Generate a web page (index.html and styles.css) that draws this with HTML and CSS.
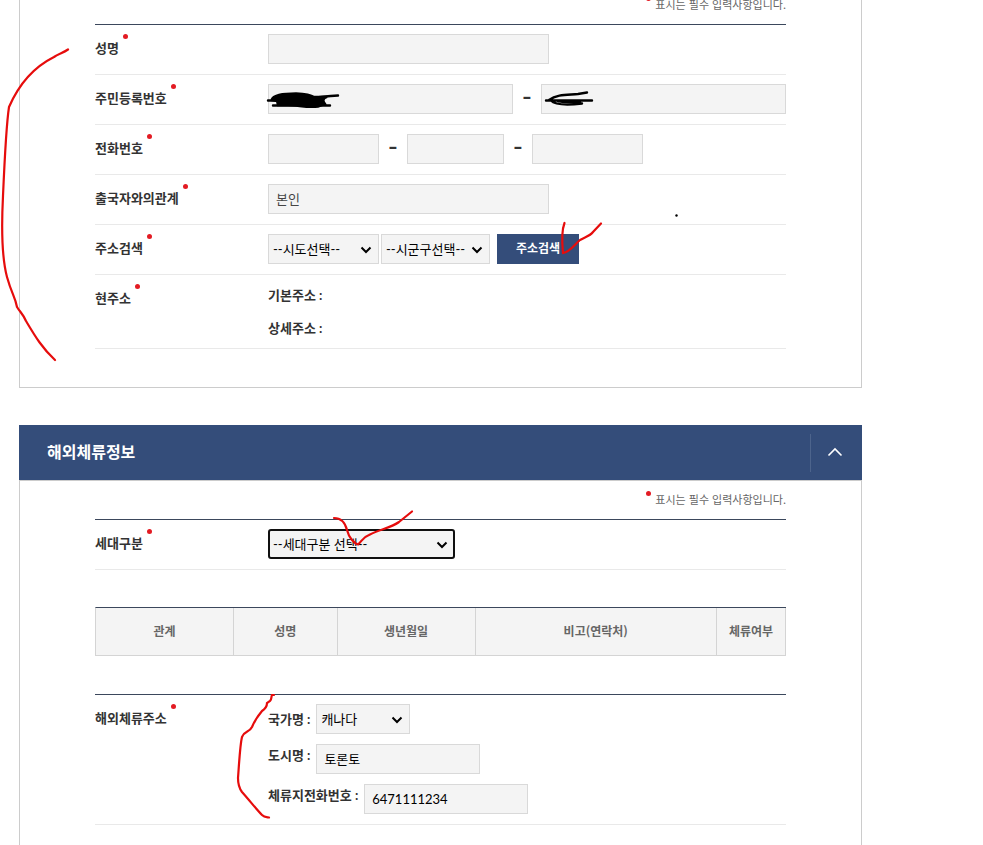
FILE: index.html
```html
<!DOCTYPE html>
<html lang="ko">
<head>
<meta charset="utf-8">
<meta name="viewport" content="width=device-width, initial-scale=1">
<title>해외체류정보</title>
<link rel="stylesheet" href="styles.css">
</head>
<body>
<main class="page">
  <section class="panel panel-first">
    <div class="panel-body">
      <p class="note"><i class="dot"></i><span>표시는 필수 입력사항입니다.</span></p>
      <div class="form">
        <div class="row">
          <label class="name" for="name">성명<i class="dot"></i></label>
          <div class="value"><input class="field w-long" id="name" type="text"></div>
        </div>
        <div class="row">
          <label class="name" for="ssn1">주민등록번호<i class="dot"></i></label>
          <div class="value">
            <input class="field grow" id="ssn1" type="text">
            <span class="dash">-</span>
            <input class="field grow" type="text" aria-labelledby="ssn1">
          </div>
        </div>
        <div class="row">
          <label class="name" for="tel1">전화번호<i class="dot"></i></label>
          <div class="value">
            <input class="field w-tel" id="tel1" type="text">
            <span class="dash">-</span>
            <input class="field w-mid" type="text" aria-labelledby="tel1">
            <span class="dash">-</span>
            <input class="field w-tel" type="text" aria-labelledby="tel1">
          </div>
        </div>
        <div class="row">
          <label class="name" for="relation">출국자와의관계<i class="dot"></i></label>
          <div class="value"><input class="field w-long muted" id="relation" type="text" value="본인"></div>
        </div>
        <div class="row">
          <label class="name" for="sido">주소검색<i class="dot"></i></label>
          <div class="value tight">
            <span class="picker w-tel"><select class="field select" id="sido"><option>--시도선택--</option></select><svg class="arrow" viewBox="0 0 12 8"><path d="M1.500 1.500 6 6l4.500-4.500"/></svg></span>
            <span class="picker w-gu"><select class="field select" aria-labelledby="sido"><option>--시군구선택--</option></select><svg class="arrow" viewBox="0 0 12 8"><path d="M1.500 1.500 6 6l4.500-4.500"/></svg></span>
            <button class="search" type="button">주소검색</button>
          </div>
        </div>
        <div class="row">
          <span class="name">현주소<i class="dot"></i></span>
          <div class="address">
            <div>기본주소 :</div>
            <div>상세주소 :</div>
          </div>
        </div>
      </div>
    </div>
  </section>

  <section class="panel">
    <header class="panel-head">
      <h2>해외체류정보</h2>
      <button class="toggle" type="button" aria-label="접기">
        <svg width="16" height="10" viewBox="0 0 16 10" fill="none" stroke="#fff" stroke-width="1.600"><path d="M1.500 8.500 8 2l6.500 6.500"/></svg>
      </button>
    </header>
    <div class="panel-body">
      <p class="note"><i class="dot"></i><span>표시는 필수 입력사항입니다.</span></p>
      <div class="form">
        <div class="row">
          <label class="name" for="household">세대구분<i class="dot"></i></label>
          <div class="value"><span class="picker w-house"><select class="field select focused" id="household"><option>--세대구분 선택--</option></select><svg class="arrow" viewBox="0 0 12 8"><path d="M1.500 1.500 6 6l4.500-4.500"/></svg></span></div>
        </div>
      </div>

      <table class="members">
        <colgroup><col class="c-rel"><col class="c-name"><col class="c-birth"><col class="c-memo"><col class="c-stay"></colgroup>
        <thead>
          <tr><th>관계</th><th>성명</th><th>생년월일</th><th>비고(연락처)</th><th>체류여부</th></tr>
        </thead>
      </table>

      <div class="form">
        <div class="row">
          <span class="name">해외체류주소<i class="dot"></i></span>
          <div class="stack">
            <div class="line"><label class="center" for="country">국가명 :</label><span class="picker w-country"><select class="field select" id="country"><option>캐나다</option></select><svg class="arrow" viewBox="0 0 12 8"><path d="M1.500 1.500 6 6l4.500-4.500"/></svg></span></div>
            <div class="line"><label for="city">도시명 :</label><input class="field w-short" id="city" type="text" value="토론토"></div>
            <div class="line"><label for="stay-tel">체류지전화번호 :</label><input class="field w-short" id="stay-tel" type="text" value="6471111234"></div>
          </div>
        </div>
      </div>
    </div>
  </section>
</main>

<svg class="ink" width="720" height="845" viewBox="0 0 720 845" aria-hidden="true">
  <g class="red">
    <path d="M68 49.500C63 53 58 54 54 57C34 67 19 84 9 107C7 120 5 150 3 196C1 235 3 262 7 277C12 295 15 296 17 307C20 312 23 314 26 321C35 336 42 348 55 360"/>
    <path d="M564.500 223C561 232 562 243 563 253C570 252 575 244 580 240C585 237 590 236 593 232L601 223.500"/>
    <path d="M334 518C341 518 345 522 347 530C349 538 354 543 358 544.500C362 541 363 537 369 535C380 529 391 528 399 522L412 511.500"/>
    <path d="M274 695H272C271 697 272 699 270 701L267 703C267 706 265 709 262 711C257 717 254 722 252 727C249 733 245 730 242 737C240 745 239 765 238 778C238 785 239 788 242 792C250 801 257 810 262 815C264 817 266 817 269 817.500"/>
  </g>
  <g class="black">
    <path class="fill" d="M272 99C274 95 285 93.500 296 93.500C305 94 311 95 314 97L327 97C322 99 323 101 325 104L318 106.500C307 108 298 105 288 105H278L277 101L272 100Z"/>
    <path d="M268 100.500H276M273 105.500H330M312 97C318 98 323 96 338 95.500"/>
    <path d="M546 100.500H592M549 100C557 94 568 95 578 94L587 92.500M551 100.500C555 105 565 105.500 582 103.500M558 101C566 103 573 101 580 102"/>
    <circle class="speck" cx="676.500" cy="215.500" r="1.200"/>
  </g>
</svg>
</body>
</html>
```

FILE: styles.css
```css
* { box-sizing: border-box; }

body {
  margin: 0;
  background: #fff;
  color: #333;
  font-family: "Noto Sans CJK KR", sans-serif;
  font-size: 13px;
}

.page {
  max-width: 862px;
  padding-left: 19px;
  overflow: hidden;
}

.panel { margin-bottom: 37px; }
.panel-first { margin-top: -15px; }

.panel-body {
  padding: 0 75px 38px;
  border: 1px solid #ccc;
}

.panel-head {
  display: flex;
  align-items: center;
  justify-content: space-between;
  height: 55px;
  padding-left: 28px;
  background: #344d7a;
  color: #fff;
}

.panel-head h2 {
  margin: 0;
  padding-bottom: 3px;
  font-size: 16px;
  font-weight: 700;
}

.toggle {
  display: flex;
  align-items: center;
  justify-content: center;
  width: 52px;
  height: 38px;
  padding: 0 4px 2px 0;
  border: 0;
  border-left: 1px solid #4d648c;
  background: none;
}

.dot {
  flex: none;
  width: 5px;
  height: 5px;
  border-radius: 50%;
  background: #e31b23;
}

.note {
  display: flex;
  justify-content: flex-end;
  gap: 4px;
  height: 38px;
  margin: 0;
  padding-top: 10px;
  color: #666;
  font-size: 11px;
  line-height: 16px;
}

.form { border-top: 1px solid #3b475c; }

.row {
  display: flex;
  border-bottom: 1px solid #e9e9e9;
}

.name {
  display: flex;
  flex: none;
  gap: 4px;
  width: 173px;
  padding: 9px 0 10px;
  font-weight: 700;
  line-height: 28px;
}

.value {
  display: flex;
  flex: 1;
  min-width: 0;
  padding: 9px 0 10px;
}

.tight { gap: 2px; }

.address {
  padding: 4px 0 3px;
  font-family: Lato, "Noto Sans CJK KR", sans-serif;
  font-weight: 700;
  line-height: 33px;
}

.field {
  height: 30px;
  min-width: 0;
  padding: 0 7px 1px;
  border: 1px solid #d9d9d9;
  border-radius: 0;
  background-color: #f4f4f4;
  color: #000;
  font-family: Lato, "Noto Sans CJK KR", sans-serif;
  font-size: 13px;
}

.muted { color: #444; }

.picker {
  position: relative;
  display: flex;
}

.select {
  width: 100%;
  padding: 0 18px 1px 4px;
  appearance: none;
}

.arrow {
  position: absolute;
  top: 12px;
  right: 7px;
  width: 12px;
  height: 8px;
  fill: none;
  stroke: #000;
  stroke-width: 2;
  pointer-events: none;
}

.focused {
  padding-left: 3px;
  border: 2px solid #101010;
  border-radius: 3px;
}

.grow { flex: 1; }
.w-long { width: 281px; }
.w-tel { width: 111px; }
.w-mid { width: 97px; }
.w-gu { width: 109px; }
.w-house { width: 187px; }
.w-country { width: 94px; }
.w-short { width: 164px; }

.dash {
  width: 28px;
  font-family: "Liberation Sans", sans-serif;
  font-size: 28px;
  font-weight: 400;
  line-height: 24px;
  text-align: center;
}

.search {
  width: 82px;
  height: 30px;
  margin-left: 5px;
  padding: 0 0 3px;
  border: 0;
  background: #344d7a;
  color: #fff;
  font: 700 12px "Noto Sans CJK KR", sans-serif;
}

.members {
  width: 100%;
  margin: 37px 0 38px;
  border-collapse: separate;
  border-spacing: 0;
  border-top: 1px solid #3b475c;
  border-left: 1px solid #d4d4d4;
  table-layout: fixed;
}

.members th {
  height: 48px;
  padding: 0 0 2px;
  border-right: 1px solid #d4d4d4;
  border-bottom: 1px solid #d4d4d4;
  background: #f4f4f4;
  color: #666;
  font-size: 12px;
  font-weight: 700;
}

.c-rel { width: 20%; }
.c-name { width: 15%; }
.c-birth { width: 20%; }
.c-memo { width: 35%; }
.c-stay { width: 10%; }

.stack {
  display: flex;
  flex-direction: column;
  gap: 10px;
  padding: 9px 0 10px;
}

.line {
  display: flex;
  gap: 6px;
  font-family: Lato, "Noto Sans CJK KR", sans-serif;
  font-weight: 700;
  line-height: 22px;
}

.center { align-self: center; }

/* Pen marks drawn over the form */
.ink {
  position: absolute;
  top: 0;
  left: 0;
  pointer-events: none;
}

.red {
  fill: none;
  stroke: #e60c0c;
  stroke-width: 2.2;
  stroke-linecap: round;
}

.black {
  fill: none;
  stroke: #000;
  stroke-width: 2.4;
  stroke-linecap: round;
}

.black .fill { fill: #000; }
.black .speck { fill: #000; stroke: none; }
```
